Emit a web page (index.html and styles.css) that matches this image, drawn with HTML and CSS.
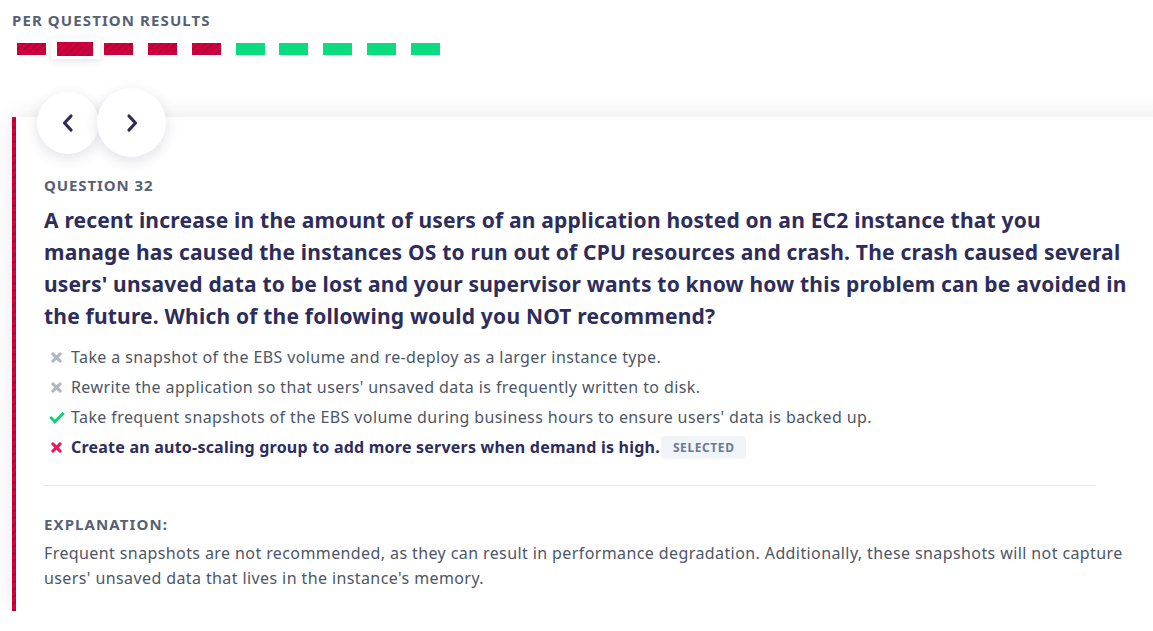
FILE: index.html
```html
<!DOCTYPE html>
<html>
<head>
<meta charset="utf-8">
<link rel="stylesheet" href="styles.css">
</head>
<body>
<div class="page">
  <h2 class="results-title">PER QUESTION RESULTS</h2>
  <div class="bars">
    <span class="bar-item"><span class="bar wrong"></span></span>
    <span class="bar-item current"><span class="bar wrong"></span></span>
    <span class="bar-item"><span class="bar wrong"></span></span>
    <span class="bar-item"><span class="bar wrong"></span></span>
    <span class="bar-item"><span class="bar wrong"></span></span>
    <span class="bar-item"><span class="bar right"></span></span>
    <span class="bar-item"><span class="bar right"></span></span>
    <span class="bar-item"><span class="bar right"></span></span>
    <span class="bar-item"><span class="bar right"></span></span>
    <span class="bar-item"><span class="bar right"></span></span>
  </div>

  <div class="card">
    <div class="nav">
      <button class="nav-btn prev" aria-label="Previous">
        <svg width="14" height="20" viewBox="0 0 14 20"><path d="M10 3 L3.5 10 L10 17" fill="none" stroke="#2c2b5a" stroke-width="3.2" stroke-linecap="round" stroke-linejoin="round"/></svg>
      </button>
      <button class="nav-btn next" aria-label="Next">
        <svg width="14" height="20" viewBox="0 0 14 20"><path d="M4 3 L10.5 10 L4 17" fill="none" stroke="#2c2b5a" stroke-width="3.2" stroke-linecap="round" stroke-linejoin="round"/></svg>
      </button>
    </div>
    <div class="card-body">
      <div class="q-label">QUESTION 32</div>
      <p class="q-text">A recent increase in the amount of users of an application hosted on an EC2 instance that you<br>manage has caused the instances OS to run out of CPU resources and crash. The crash caused several<br>users' unsaved data to be lost and your supervisor wants to know how this problem can be avoided in<br>the future. Which of the following would you NOT recommend?</p>
      <ul class="options">
        <li class="opt"><span class="ico ico-x gray"></span>Take a snapshot of the EBS volume and re-deploy as a larger instance type.</li>
        <li class="opt"><span class="ico ico-x gray"></span>Rewrite the application so that users' unsaved data is frequently written to disk.</li>
        <li class="opt"><span class="ico ico-check"></span>Take frequent snapshots of the EBS volume during business hours to ensure users' data is backed up.</li>
        <li class="opt chosen"><span class="ico ico-x red"></span>Create an auto-scaling group to add more servers when demand is high.<span class="badge">SELECTED</span></li>
      </ul>
      <hr class="divider">
      <div class="exp-label">EXPLANATION:</div>
      <p class="exp-text">Frequent snapshots are not recommended, as they can result in performance degradation. Additionally, these snapshots will not capture users' unsaved data that lives in the instance's memory.</p>
    </div>
  </div>
</div>
</body>
</html>
```

FILE: styles.css
```css
html, body {
  margin: 0;
  padding: 0;
  background: #ffffff;
  overflow: hidden;
}
body {
  font-family: "Noto Sans", "Open Sans", sans-serif;
  color: #4d5666;
}
.page {
  padding: 9px 0 0 12px;
}
.results-title {
  margin: 0;
  font-size: 15px;
  line-height: 22px;
  font-weight: 700;
  letter-spacing: 1.1px;
  color: #566175;
}
.bars {
  display: flex;
  align-items: center;
  margin: 11px 0 0 -2.4px;
  height: 14px;
}
.bar-item {
  position: relative;
  display: flex;
  align-items: center;
  justify-content: center;
  width: 43.75px;
  height: 14px;
}
.bar-item.current::before {
  content: "";
  position: absolute;
  left: -2.5px;
  right: -3px;
  top: -4px;
  bottom: -3px;
  background: #fff;
  box-shadow: 0 2px 8px rgba(30, 40, 70, 0.12);
}
.bar {
  position: relative;
  display: block;
  width: 29px;
  height: 12px;
}
.bar-item.current .bar {
  width: 36px;
  height: 14px;
  left: 0;
}
.bar.wrong {
  background: repeating-linear-gradient(-45deg, #d3003d 0 3px, #b5003a 3px 5px);
}
.bar.right {
  background: #0cdc80;
}
.card {
  position: relative;
  margin-top: 61px;
  width: 1160px;
  background: #fff;
  border-left: 4px solid transparent;
  border-image: repeating-linear-gradient(-45deg, #d3003d 0 3px, #b5003a 3px 5px) 1;
  box-shadow: 0 -6px 22px rgba(0, 0, 0, 0.05), 0 6px 18px rgba(0, 0, 0, 0.05);
}
.nav {
  position: absolute;
  top: -29px;
  left: 21px;
  display: flex;
  align-items: center;
}
.nav-btn {
  display: flex;
  align-items: center;
  justify-content: center;
  border: none;
  border-radius: 50%;
  background: #fff;
  box-shadow: 0 4px 14px rgba(40, 40, 90, 0.14);
  padding: 0;
}
.nav-btn.prev {
  width: 62px;
  height: 62px;
}
.nav-btn.next {
  width: 69px;
  height: 69px;
  margin-left: -2px;
}
.card-body {
  padding: 57px 30px 20px 28px;
  width: 1080px;
}
.q-label, .exp-label {
  font-size: 15px;
  line-height: 22px;
  font-weight: 700;
  color: #566175;
}
.q-label { letter-spacing: 0.9px; }
.exp-label { letter-spacing: 1.1px; }
.q-text {
  margin: 8px -20px 10px 0;
  font-size: 21px;
  line-height: 32px;
  font-weight: 700;
  letter-spacing: 0.2px;
  color: #2d2d5c;
}
.options {
  list-style: none;
  margin: 0;
  padding: 0 0 0 6px;
}
.opt {
  display: flex;
  align-items: center;
  height: 30px;
  font-size: 16px;
  letter-spacing: 0.4px;
  color: #4d5666;
}
.opt.chosen {
  font-weight: 700;
  letter-spacing: 0.22px;
  color: #2d2d5c;
}
.ico {
  position: relative;
  width: 12px;
  height: 12px;
  margin-right: 9px;
  flex: none;
}
.ico-x::before, .ico-x::after {
  content: "";
  position: absolute;
  left: 4.5px;
  top: -0.5px;
  width: 3px;
  height: 13px;
  border-radius: 1px;
  transform: rotate(45deg);
}
.ico-x::after { transform: rotate(-45deg); }
.ico-x.gray::before, .ico-x.gray::after { background: #b0b7c3; }
.ico-x.red::before, .ico-x.red::after { background: #f0145a; }
.ico-check::before {
  content: "";
  position: absolute;
  left: 3px;
  top: -2px;
  width: 5px;
  height: 11px;
  border-right: 3.5px solid #11d17a;
  border-bottom: 3.5px solid #11d17a;
  transform: rotate(45deg);
}
.badge {
  display: inline-block;
  margin-left: 1px;
  padding: 0 11px 0 12px;
  height: 23px;
  line-height: 23px;
  border-radius: 3px;
  background: #f1f5f9;
  font-size: 12px;
  font-weight: 700;
  letter-spacing: 0.6px;
  color: #6b7a90;
}
.divider {
  border: none;
  border-top: 1px solid #e9e9ec;
  margin: 23px 0 27px;
  width: 1052px;
}
.exp-label {
  margin-bottom: 6px;
}
.exp-text {
  margin: 0;
  font-size: 16px;
  line-height: 25px;
  letter-spacing: 0.4px;
  color: #4d5666;
}
```
